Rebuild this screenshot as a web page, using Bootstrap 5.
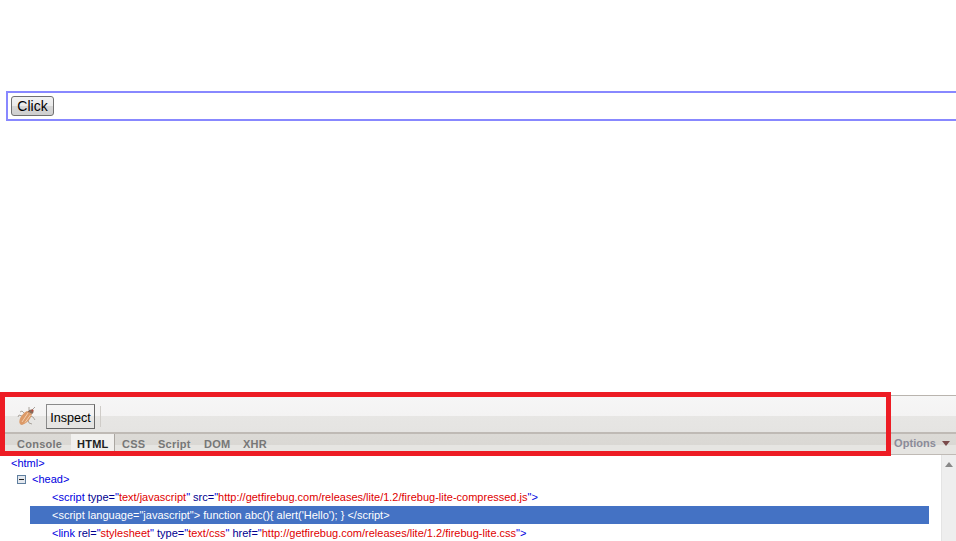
<!DOCTYPE html>
<html lang="en">
<head>
  <meta charset="UTF-8">
  <title>Firebug Lite</title>
  <link href="https://cdn.jsdelivr.net/npm/bootstrap@5.3.0/dist/css/bootstrap.min.css" rel="stylesheet">
  <style>
    html, body { height: 541px; overflow: hidden; background: #fff; }
    body { font-family: "Liberation Sans", Arial, sans-serif; }
    .page { height: 541px; position: relative; }

    .demo-area { height: 395px; padding: 91px 0 0 6px; }
    .demo-box { height: 30px; border: 2px solid #8888ff; border-right: 0; padding: 3px 0 0 3px; }
    .demo-btn { display: block; width: 43px; height: 20px; font-size: 14px; line-height: 17px; padding: 0; color: #000;
      border: 1px solid #707070; border-radius: 3px; background: linear-gradient(#f2f2f2 0, #ebebeb 48%, #d6d6d6 52%, #cfcfcf 100%); }

    .fb-panel { height: 146px; }
    .fb-toolbar { height: 39px; border-top: 1px solid #b9b4ae; border-bottom: 2px solid #bfbab5;
      background: linear-gradient(#f6f6f6 0, #f4f3f3 55%, #e7e6e4 55%, #e5e4e2 100%); padding: 8px 0 0 15px; }
    .fb-bug { width: 22px; height: 23px; }
    .fb-inspect { width: 49px; height: 25px; margin: 0 0 0 9px; font-size: 12.6px; line-height: 26px; color: #000;
      border: 1px solid #8a8a8a; border-right-color: #666; border-bottom-color: #666; text-align: center; }
    .fb-sep { width: 1px; height: 21px; margin: 2px 0 0 5px; background: #cfccc8; }

    .fb-tabs { height: 21px; border-bottom: 1px solid #bfbab5;
      background: linear-gradient(#dcdad6 0, #dad8d4 55%, #e6e5e2 55%, #e6e5e2 100%);
      font-size: 11px; font-weight: 700; letter-spacing: .25px; color: #777; padding-left: 17px; }
    .fb-tab { line-height: 20px; }
    .fb-tab.active { color: #222; background: #f1f0ee; border-right: 1px solid #aaa6a1; width: 44px; height: 20px; margin: 0 7px 0 -6px; padding-left: 6px; }
    .fb-tab-console { width: 60px; }
    .fb-tab-css { width: 36px; }
    .fb-tab-script { width: 46px; }
    .fb-tab-dom { width: 39px; }
    .fb-options { color: #8b8b99; letter-spacing: .05px; padding-right: 6px; line-height: 19px; }
    .fb-caret { display: inline-block; margin-left: 6px; border: 4px solid transparent; border-top: 5px solid #7a4a4a; border-bottom: 0; vertical-align: 1px; }

    .fb-body { height: 86px; overflow: hidden; }
    .fb-tree { width: 941px; font-size: 11px; color: #0000e0; }
    .fb-row { height: 18px; line-height: 18px; white-space: nowrap; }
    .fb-row.l0 { padding-left: 11px; height: 16px; line-height: 16px; }
    .fb-row.l1 { padding-left: 17px; height: 17px; line-height: 17px; }
    .fb-row.l2 { margin-right: 12px; margin-left: 30px; padding-left: 22px; }
    .fb-row.selected { background: #4472c4; color: #fff; }
    .fb-row b { font-weight: 400; color: #e00000; }
    .fb-row i { font-style: normal; color: #000090; }
    .fb-toggle { display: inline-block; width: 9px; height: 9px; border: 1px solid #5f7f9f; background: #e4e8ee; position: relative; margin-right: 6px; vertical-align: -1px; }
    .fb-toggle::after { content: ""; position: absolute; left: 1px; right: 1px; top: 3px; height: 1px; background: #222; }
    .fb-scroll { width: 15px; background: #eee; border-left: 1px solid #e4e4e4; }
    .fb-arrow { display: block; margin: 7px auto 0; width: 0; border: 4px solid transparent; border-bottom: 5px solid #888; border-top: 0; }

    .note-box { position: absolute; left: 0; top: 392px; width: 891px; height: 64px; border: 5px solid #ed1c24; pointer-events: none; }
  </style>
</head>
<body>
  <div class="page">
    <div class="demo-area">
      <div class="demo-box"><button class="demo-btn" type="button">Click</button></div>
    </div>

    <div class="fb-panel">
      <div class="fb-toolbar d-flex align-items-start">
        <svg class="fb-bug" viewBox="0 0 22 23">
          <g stroke="#aaa49d" stroke-width="1" fill="none">
            <path d="M9 9 7 7 5 8M7 12 4 11 3 13M8 16 6 18 7 21M13 16 14 19 17 20M15 12 18 13 20 16M14 6 14 3M17 6 20 3"/>
          </g>
          <path d="M5 20 C3 17 6 10 12 7 L17 10 C16 15 11 20 8 20.500 C7 21 6 21 5 20Z" fill="#dc9a68"/>
          <path d="M7 18 13 9M10 18.500 15.500 11" stroke="#f3d0ae" stroke-width="1"/>
          <path d="M12.500 7.500 C14 6 16 5 18 6 C19 7.500 18.500 9 17 10Z" fill="#8a6a58"/>
          <circle cx="17.500" cy="6.500" r="1" fill="#b8483a"/>
        </svg>
        <div class="fb-inspect">Inspect</div>
        <div class="fb-sep"></div>
      </div>

      <div class="fb-tabs d-flex">
        <div class="fb-tab fb-tab-console">Console</div>
        <div class="fb-tab active">HTML</div>
        <div class="fb-tab fb-tab-css">CSS</div>
        <div class="fb-tab fb-tab-script">Script</div>
        <div class="fb-tab fb-tab-dom">DOM</div>
        <div class="fb-tab">XHR</div>
        <div class="fb-options ms-auto">Options<span class="fb-caret"></span></div>
      </div>

      <div class="fb-body d-flex justify-content-between">
        <div class="fb-tree">
          <div class="fb-row l0">&lt;html&gt;</div>
          <div class="fb-row l1"><span class="fb-toggle"></span>&lt;head&gt;</div>
          <div class="fb-row l2">&lt;script <i>type=</i>"<b>text/javascript</b>" <i>src=</i>"<b>http://getfirebug.com/releases/lite/1.2/firebug-lite-compressed.js</b>"&gt;</div>
          <div class="fb-row l2 selected">&lt;script language="javascript"&gt; function abc(){ alert('Hello'); } &lt;/script&gt;</div>
          <div class="fb-row l2">&lt;link <i>rel=</i>"<b>stylesheet</b>" <i>type=</i>"<b>text/css</b>" <i>href=</i>"<b>http://getfirebug.com/releases/lite/1.2/firebug-lite.css</b>"&gt;</div>
        </div>
        <div class="fb-scroll"><span class="fb-arrow"></span></div>
      </div>
    </div>

    <div class="note-box"></div>
  </div>
  <script src="https://cdn.jsdelivr.net/npm/bootstrap@5.3.0/dist/js/bootstrap.bundle.min.js"></script>
</body>
</html>
